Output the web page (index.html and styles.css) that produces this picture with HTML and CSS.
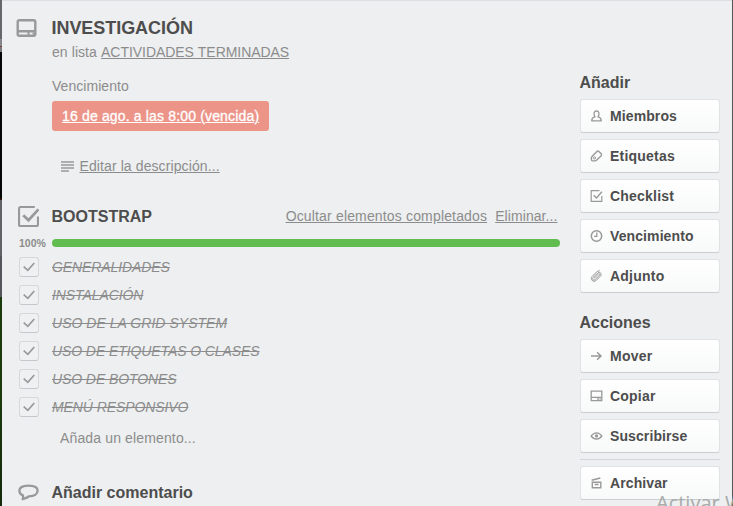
FILE: index.html
```html
<!DOCTYPE html>
<html lang="es">
<head>
<meta charset="utf-8">
<title>INVESTIGACIÓN</title>
<link rel="stylesheet" href="styles.css">
</head>
<body>
<svg width="0" height="0" class="defs">
  <defs>
    <symbol id="card" viewBox="0 0 20 18"><path fill="none" stroke="currentColor" stroke-width="2.400" d="M2.700 1.200h14.600a1.500 1.500 0 0 1 1.500 1.500v12.600a1.500 1.500 0 0 1-1.500 1.500H2.700a1.500 1.500 0 0 1-1.500-1.500V2.700a1.500 1.500 0 0 1 1.500-1.500zM1 12.300h18"/><path fill="currentColor" d="M11 12h2v5h-2zM16 13.500h2v2h-2z"/></symbol>
    <symbol id="check-box" viewBox="0 0 20 20"><path fill="none" stroke="currentColor" stroke-width="2" d="M16 1H2.500A1.500 1.500 0 0 0 1 2.500v15A1.500 1.500 0 0 0 2.500 19h15a1.500 1.500 0 0 0 1.500-1.500V10"/><path fill="none" stroke="currentColor" stroke-width="2.600" d="M5 8.800l5 4.800 9.500-10.400"/></symbol>
    <symbol id="small-check-box" viewBox="0 0 12 12"><path fill="none" stroke="currentColor" stroke-width="1.200" d="M9 .7H.7v10.600h10.600V6"/><path fill="none" stroke="currentColor" stroke-width="1.400" d="M3.200 5.200L6 7.900l5.400-6.200"/></symbol>
    <symbol id="check" viewBox="0 0 12 10"><path fill="none" stroke="currentColor" stroke-width="1.700" d="M.7 4.600l4.100 3.700L11.300 1"/></symbol>
    <symbol id="bubble" viewBox="0 0 20 16"><path fill="none" stroke="currentColor" stroke-width="2.200" stroke-linejoin="round" d="M10 1.500c5.300 0 8.700 1.800 8.700 4.900 0 3-3.300 5.100-8.200 5.200-1.900 1.500-3.800 2.500-6.100 2.800.6-1.200.7-2.400.3-3.600C2.500 9.900 1.300 8.400 1.300 6.400c0-3.100 3.400-4.900 8.700-4.900z"/></symbol>
    <symbol id="member" viewBox="0 0 12 12"><path fill="none" stroke="currentColor" stroke-width="1.300" stroke-linejoin="round" d="M4.500 6.900C2.700 4 3.400 1 6 1s3.300 3 1.500 5.900c2.300.4 3.200 1.500 3.300 3.900H1.200c.1-2.400 1-3.500 3.300-3.900z"/></symbol>
    <symbol id="tag" viewBox="0 0 12 12"><path fill="none" stroke="currentColor" stroke-width="1.400" stroke-linejoin="round" d="M6.100 1.700c.8-.8 1.700-.8 2.500 0l1.900 1.900c.7.700.7 1.600 0 2.300L6 10.300c-.4.400-.9.600-1.400.6H2.300c-.9 0-1.400-.5-1.400-1.400V7.800c0-.6.200-1 .6-1.400z"/><circle cx="4" cy="7.900" r="1.100" fill="none" stroke="currentColor"/></symbol>
    <symbol id="clock" viewBox="0 0 12 12"><circle cx="6" cy="6" r="5.200" fill="none" stroke="currentColor" stroke-width="1.500"/><path fill="none" stroke="currentColor" stroke-width="1.300" d="M6.300 2.500v3.800H3.600"/></symbol>
    <symbol id="clip" viewBox="0 0 12 12"><path fill="none" stroke="currentColor" stroke-width="1" stroke-linecap="round" d="M3.800 8.100l4.100-4c.9-.9 2 .1 1.100 1.100L4.700 9.500C3 11 1.100 9.200 2.600 7.500L7 3.100c2.200-2 4.900.6 3 2.900l-4.400 4.500C2.900 12.800-.7 9.500 1.500 6.600L6.200 1.800c.8-.7 1.700-1 2.600-1"/></symbol>
    <symbol id="arrow" viewBox="0 0 12 12"><path fill="none" stroke="currentColor" stroke-width="1.500" d="M.5 6h10M6.600 2.200L10.500 6 6.600 9.800"/></symbol>
    <symbol id="small-card" viewBox="0 0 12 12"><path fill="none" stroke="currentColor" stroke-width="1.300" d="M.7 1.100h10.600v9.500H.7zM.6 7.400h10.800M7.500 7.600v2.800M9 9h1.200"/></symbol>
    <symbol id="eye" viewBox="0 0 12 12"><path fill="none" stroke="currentColor" stroke-width="1.300" d="M.6 6c3-4.300 7.800-4.300 10.800 0C8.400 10 3.600 10 .6 6z"/><circle cx="6" cy="5.900" r="1.700" fill="currentColor"/></symbol>
    <symbol id="archive" viewBox="0 0 12 12"><path fill="none" stroke="currentColor" stroke-width="1.400" d="M1.800 5.200h8.500v5.600H1.800zM1.100 3.200l8.700-2.200M4.200 7.500H8"/></symbol>
  </defs>
</svg>
<div class="screen">
  <div class="backdrop-left"></div>
  <div class="window">
    <main class="main">
      <header class="title-row"><svg class="icon-card"><use href="#card"/></svg><h1>INVESTIGACIÓN</h1></header>
      <p class="in-list">en lista <a class="list-name">ACTIVIDADES TERMINADAS</a></p>
      <p class="due-label">Vencimiento</p>
      <div class="due"><a>16 de ago. a las 8:00 (vencida)</a></div>
      <div class="edit"><svg class="lines" viewBox="0 0 13 11"><path fill="none" stroke="currentColor" stroke-width="1.700" d="M0 1h13M0 4h13M0 7h13M0 10h8"/></svg><a>Editar la descripción...</a></div>
      <div class="checklist-head"><svg class="icon-check"><use href="#check-box"/></svg><h2>BOOTSTRAP</h2><nav><a class="hide">Ocultar elementos completados</a><a class="delete">Eliminar...</a></nav></div>
      <div class="progress"><span>100%</span><div class="bar"></div></div>
      <ul class="items">
        <li><i><svg><use href="#check"/></svg></i><s>GENERALIDADES</s></li>
        <li><i><svg><use href="#check"/></svg></i><s>INSTALACIÓN</s></li>
        <li><i><svg><use href="#check"/></svg></i><s class="wide">USO DE LA GRID SYSTEM</s></li>
        <li><i><svg><use href="#check"/></svg></i><s>USO DE ETIQUETAS O CLASES</s></li>
        <li><i><svg><use href="#check"/></svg></i><s>USO DE BOTONES</s></li>
        <li><i><svg><use href="#check"/></svg></i><s>MENÚ RESPONSIVO</s></li>
      </ul>
      <p class="add-item">Añada un elemento...</p>
      <div class="comment-head"><svg class="icon-bubble"><use href="#bubble"/></svg><h2>Añadir comentario</h2></div>
    </main>
    <aside class="sidebar">
      <h3 class="add-title">Añadir</h3>
      <div class="buttons">
        <a class="button"><svg><use href="#member"/></svg><span>Miembros</span></a>
        <a class="button"><svg><use href="#tag"/></svg><span class="roomy">Etiquetas</span></a>
        <a class="button"><svg><use href="#small-check-box"/></svg><span class="roomy">Checklist</span></a>
        <a class="button"><svg><use href="#clock"/></svg><span>Vencimiento</span></a>
        <a class="button"><svg><use href="#clip"/></svg><span class="roomy">Adjunto</span></a>
      </div>
      <h3 class="actions-title">Acciones</h3>
      <div class="buttons">
        <a class="button"><svg><use href="#arrow"/></svg><span class="roomy">Mover</span></a>
        <a class="button"><svg><use href="#small-card"/></svg><span class="roomy">Copiar</span></a>
        <a class="button"><svg><use href="#eye"/></svg><span>Suscribirse</span></a>
      </div>
      <hr>
      <a class="button"><svg><use href="#archive"/></svg><span>Archivar</span></a>
    </aside>
  </div>
  <div class="backdrop-right"></div>
  <div class="watermark">Activar W</div>
</div>
</body>
</html>
```
FILE: styles.css
```css
* { box-sizing: border-box; margin: 0; padding: 0; }
body { font: 14px/20px "Liberation Sans", Arial, sans-serif; color: #8c8c8c; overflow: hidden; }
a { color: inherit; text-decoration: underline; }
svg { display: block; flex: none; color: #999; }
.defs { position: absolute; }
.screen { position: relative; display: flex; width: 733px; height: 506px; overflow: hidden; }
.backdrop-left { width: 2px; background: linear-gradient(#66676a 0 39px, #85868a 39px 46px, #813d3b 46px 47px, #77787b 47px 52px, #050505 52px 198px, #27130a 198px 200px, #606266 200px 256px, #55565c 256px 297px, #1b3a0d 297px 400px, #152a0c); }
.backdrop-right { width: 1px; background: #555a58; }
.window { display: flex; width: 730px; background: #edeff0; border-top: 1px solid #dcdee1; }
.main { width: 558px; padding: 17px 0 0 14px; }
h1, h2, h3 { color: #4d4d4d; font-size: 16px; line-height: 20px; white-space: nowrap; }
.title-row { display: flex; height: 20px; }
.icon-card { width: 21px; height: 18px; margin: 1px 14.500px 0 0; }
h1 { font-size: 18px; letter-spacing: -.05px; }
h2 { margin-left: -.5px; letter-spacing: 0; }
h3 { margin-left: -.5px; }
.in-list { margin: 4px 0 0 36px; word-spacing: .4px; }
.list-name { letter-spacing: -.05px; }
.due-label { margin: 14px 0 0 36px; letter-spacing: .05px; }
.due { width: 217px; height: 30px; margin: 5px 0 0 36px; padding: 5px 10px; border-radius: 3px; background: #ec9488; color: #fff; white-space: nowrap; }
.due a { letter-spacing: .16px; -webkit-text-stroke: .3px #fff; }
.edit { display: flex; height: 20px; margin: 25px 0 0 45px; letter-spacing: .1px; }
.lines { width: 13px; height: 11px; margin: 5px 5.500px 0 0; }
.checklist-head { display: flex; height: 20px; margin: 30px 0 0 2px; }
.checklist-head h2 { padding-top: 1px; }
.icon-check { width: 21px; height: 21px; margin-right: 13px; }
.checklist-head nav { display: flex; gap: 8px; margin-left: auto; padding-right: 2.500px; }
.hide { letter-spacing: .16px; }
.delete { letter-spacing: .08px; }
.progress { display: flex; align-items: center; height: 12px; margin: 11px 0 0 3px; }
.progress span { width: 33px; font-size: 10.500px; font-weight: bold; }
.bar { width: 508px; height: 8px; border-radius: 4px; background: #61bd4f; }
.items { margin: 4px 0 0 3px; list-style: none; }
.items li { display: flex; height: 28px; padding-top: 4px; }
.items i { width: 20px; height: 20px; margin-right: 13px; padding: 4px 3px; border: 1px solid #d6d8da; border-bottom-color: #c5c8ca; border-radius: 3px; background: #eff0f2; }
.items i svg { width: 12px; height: 10px; }
.items s { font-style: italic; white-space: nowrap; letter-spacing: -.09px; }
.items s.wide { letter-spacing: .03px; }
.add-item { margin: 7px 0 0 44px; letter-spacing: .14px; }
.comment-head { display: flex; height: 20px; margin: 35px 0 0 2px; }
.icon-bubble { width: 21px; height: 17px; margin: 1px 13px 0 0; }
.sidebar { width: 140px; margin-left: 20px; padding-top: 72px; }
.buttons { display: grid; gap: 6px; margin-top: 6px; }
.button { display: flex; align-items: center; width: 140px; height: 34px; padding: 0 0 1px 9px; border: 1px solid #e0e3e5; border-bottom-color: #c9cfd3; border-radius: 3px; background: linear-gradient(#fff, #f8f9f9); color: #4d4d4d; font-weight: bold; text-decoration: none; letter-spacing: .1px; }
.button svg { width: 13px; height: 12px; margin-right: 7px; }
.roomy { letter-spacing: .22px; }
.actions-title { margin-top: 20px; }
hr { height: 1px; margin: 6px 0; border: 0; background: #d2d5da; }
.watermark { position: absolute; left: 656px; top: 489px; color: #a8abaa; font: 20px/27px "Open Sans", sans-serif; white-space: nowrap; }
```
